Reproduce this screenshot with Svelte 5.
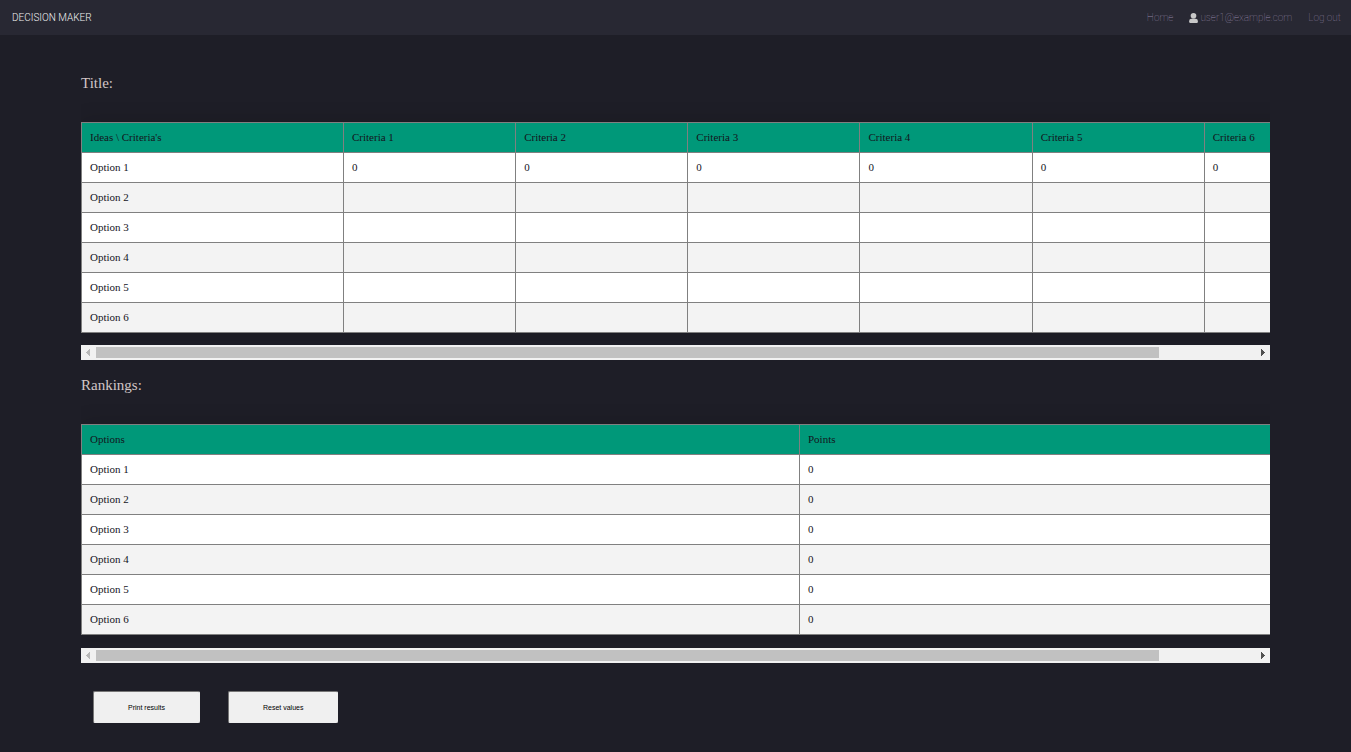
<script>
  import { onMount } from 'svelte';

  let criteria = ['Criteria 1', 'Criteria 2', 'Criteria 3', 'Criteria 4', 'Criteria 5', 'Criteria 6'];
  let options = ['Option 1', 'Option 2', 'Option 3', 'Option 4', 'Option 5', 'Option 6'];

  let scores = options.map((_, row) => criteria.map(() => (row === 0 ? '0' : '')));
  let points = options.map(() => 0);

  let boxes = [];
  let bars = [
    { size: 100, offset: 0 },
    { size: 100, offset: 0 }
  ];

  function updateBar(i) {
    const box = boxes[i];
    bars[i] = {
      size: (box.clientWidth / box.scrollWidth) * 100,
      offset: (box.scrollLeft / box.scrollWidth) * 100
    };
  }

  function updateAll() {
    boxes.forEach((_, i) => updateBar(i));
  }

  function scroll(i, amount) {
    boxes[i].scrollLeft += amount;
  }

  function resetValues() {
    scores = scores.map(row => row.map(() => ''));
    points = points.map(() => 0);
  }

  onMount(updateAll);
</script>

<svelte:window on:resize={updateAll} />

{#snippet scrollbar(i)}
  <div class="scrollbar">
    <button class="arrow" aria-label="Scroll left" disabled={bars[i].offset === 0} on:click={() => scroll(i, -40)}>
      <svg width="15" height="15" viewBox="0 0 15 15"><path d="M9 4v7h-1v-1h-1v-1h-1v-1h-1v-1h1v-1h1v-1h1v-1z" /></svg>
    </button>
    <div class="track">
      <div class="thumb" style="width: {bars[i].size}%; margin-left: {bars[i].offset}%"></div>
    </div>
    <button class="arrow" aria-label="Scroll right" on:click={() => scroll(i, 40)}>
      <svg width="15" height="15" viewBox="0 0 15 15"><path d="M6 4v7h1v-1h1v-1h1v-1h1v-1h-1v-1h-1v-1h-1v-1z" /></svg>
    </button>
  </div>
{/snippet}

<nav>
  <a class="brand" href="/">DECISION MAKER</a>
  <div class="links">
    <a href="/">Home</a>
    <a class="user" href="/account">
      <svg width="9" height="10" viewBox="0 0 448 512">
        <path d="M224 290a145 145 0 1 0 0-290 145 145 0 0 0 0 290zm100 0h-20a174 174 0 0 1-160 0h-20A124 124 0 0 0 0 414v50c0 27 21 48 48 48h352c27 0 48-21 48-48v-50a124 124 0 0 0-124-124z" />
      </svg>
      user1@example.com
    </a>
    <a href="/logout">Log out</a>
  </div>
</nav>

<main>
  <h2>Title:</h2>
  <div class="table-box" bind:this={boxes[0]} on:scroll={() => updateBar(0)}>
    <table class="ideas">
      <thead>
        <tr>
          <th>Ideas \ Criteria's</th>
          {#each criteria as name}
            <th>{name}</th>
          {/each}
        </tr>
      </thead>
      <tbody>
        {#each options as option, row}
          <tr>
            <td>{option}</td>
            {#each scores[row] as score}
              <td>{score}</td>
            {/each}
          </tr>
        {/each}
      </tbody>
    </table>
  </div>
  {@render scrollbar(0)}

  <h2>Rankings:</h2>
  <div class="table-box" bind:this={boxes[1]} on:scroll={() => updateBar(1)}>
    <table class="rankings">
      <thead>
        <tr>
          <th>Options</th>
          <th>Points</th>
        </tr>
      </thead>
      <tbody>
        {#each options as option, row}
          <tr>
            <td>{option}</td>
            <td>{points[row]}</td>
          </tr>
        {/each}
      </tbody>
    </table>
  </div>
  {@render scrollbar(1)}

  <div class="actions">
    <button on:click={() => window.print()}>Print results</button>
    <button on:click={resetValues}>Reset values</button>
  </div>
</main>

<style>
  :global(body) {
    background: #1e1e27;
  }

  nav {
    display: flex;
    align-items: center;
    justify-content: space-between;
    height: 35px;
    padding: 0 10px 0 12px;
    background: #282833;
    font-family: Roboto, sans-serif;
    font-size: 10px;
    font-weight: 100;
  }

  nav a {
    color: #9486a6;
    text-decoration: none;
  }

  nav .brand {
    color: #f0f0f0;
    font-weight: 300;
  }

  .links {
    display: flex;
    gap: 16px;
  }

  .user {
    display: flex;
    align-items: center;
    gap: 2px;
  }

  .user svg {
    fill: #c8c8c8;
  }

  main {
    padding: 0 81px 28px;
    font-family: "Liberation Serif", serif;
  }

  h2 {
    margin: 0;
    padding-top: 39px;
    color: #d2c6c6;
    font-size: 15px;
    font-weight: 400;
    line-height: 18px;
  }

  .scrollbar + h2 {
    padding-top: 16px;
  }

  .table-box {
    margin-top: 5px;
    overflow-x: auto;
    scrollbar-width: none;
  }

  table {
    width: 1296px;
    margin: 25px 0 12px;
    border-collapse: collapse;
    table-layout: fixed;
    box-shadow: 0 0 20px rgba(0, 0, 0, 0.15);
    font-size: 11px;
    line-height: 13px;
  }

  .rankings {
    margin-bottom: 13px;
  }

  .ideas th:first-child {
    width: 262px;
  }

  .rankings th:first-child {
    width: 718px;
  }

  th,
  td {
    box-sizing: border-box;
    height: 30px;
    padding: 0 8px;
    border: 1px solid #808080;
    color: #14141c;
    text-align: left;
    font-weight: 400;
  }

  th {
    background: #009879;
  }

  tbody tr {
    background: #fff;
  }

  tbody tr:nth-child(even) {
    background: #f3f3f3;
  }

  .scrollbar {
    display: flex;
    height: 15px;
    background: #f1f1f1;
  }

  .arrow {
    width: 15px;
    height: 15px;
    padding: 0;
    border: 0;
    background: none;
  }

  .arrow svg {
    display: block;
    fill: #505050;
  }

  .arrow:disabled svg {
    fill: #b8b8b8;
  }

  .track {
    flex: 1;
    padding: 2px 0;
  }

  .thumb {
    height: 11px;
    background: #c1c1c1;
  }

  .actions {
    display: flex;
    gap: 28px;
    padding: 28px 12px 0;
  }

  .actions button {
    height: 32px;
    padding: 0 34px;
    border: 1px solid #efefef;
    border-top-color: #767676;
    border-left-color: #767676;
    border-radius: 2px;
    background: #f0f0f0;
    color: #000;
    font-family: "Liberation Sans", sans-serif;
    font-size: 7px;
  }
</style>
